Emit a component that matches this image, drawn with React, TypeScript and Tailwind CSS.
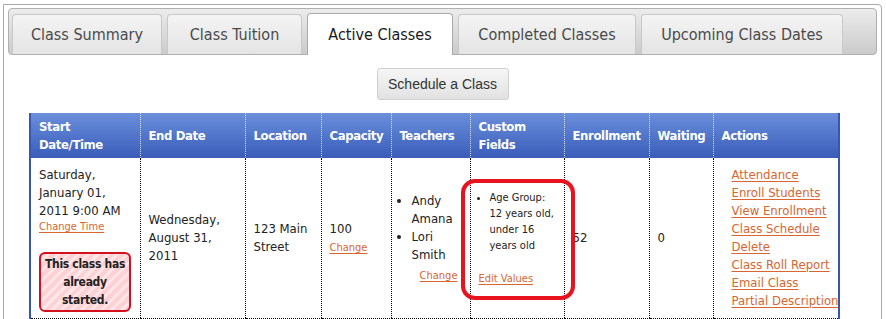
import React from 'react';

const font = { fontFamily: '"DejaVu Sans Condensed", "DejaVu Sans", sans-serif' };

const tabs = [
    { label: 'Class Summary', w: 'w-[150px]' },
    { label: 'Class Tuition', w: 'w-[135px]' },
    { label: 'Active Classes', w: 'w-[146px]', active: true },
    { label: 'Completed Classes', w: 'w-[178px]' },
    { label: 'Upcoming Class Dates', w: 'w-[202px]' },
];

const actions = [
    'Attendance',
    'Enroll Students',
    'View Enrollment',
    'Class Schedule',
    'Delete',
    'Class Roll Report',
    'Email Class',
    'Partial Description',
];

const linkCls = 'text-[#d9652f] underline underline-offset-2 decoration-1';

const Th: React.FC<{ w: string; children: React.ReactNode; first?: boolean }> = ({ w, children, first }) => (
    <th
        className={`${w} px-[8px] py-[4px] text-left align-middle font-bold text-white text-[13px] tracking-[-0.4px] leading-[18px] ${first ? '' : 'border-l border-dotted border-l-white/80'}`}
    >
        {children}
    </th>
);

const Td: React.FC<{ children?: React.ReactNode; first?: boolean; className?: string }> = ({ children, first, className }) => (
    <td
        className={`px-[8px] py-[6px] text-[13px] leading-[18px] text-[#222] border-b border-dotted border-b-black ${first ? '' : 'border-l border-dotted border-l-black'} ${className ?? 'align-middle'}`}
    >
        {children}
    </td>
);

export default function App() {
    return (
        <div className="w-[886px] h-[319px] overflow-hidden bg-white" style={font}>
            <div className="ml-[3px] mt-[4px] w-[879px] h-[330px] border border-[#a9a9a9] rounded-tr-[4px] bg-white px-[4px] pt-[3px]">
                {/* tab strip */}
                <div className="h-[47px] rounded-[4px] border border-[#b0b0b0] bg-gradient-to-b from-[#ececec] to-[#cbcbcb] flex items-end gap-[5px] pl-[3px]">
                    {tabs.map(t => (
                        <div
                            key={t.label}
                            className={`${t.w} flex items-center justify-center rounded-t-[4px] border border-b-0 text-[16px] ${
                                t.active
                                    ? 'h-[42px] -mb-px bg-white border-[#aaaaaa] text-[#1a1a1a]'
                                    : 'h-[40px] border-[#c8c8c8] bg-gradient-to-b from-[#f4f4f4] to-[#e4e4e4] text-[#4a4a4a]'
                            }`}
                        >
                            {t.label}
                        </div>
                    ))}
                </div>

                <div className="flex justify-center mt-[13px]">
                    <button
                        className="w-[132px] h-[32px] rounded-[3px] border border-[#cfcfcf] bg-gradient-to-b from-[#f6f6f6] to-[#e2e2e2] text-[14px] text-[#333]"
                        style={{ fontFamily: '"Liberation Sans", Arial, sans-serif' }}
                    >
                        Schedule a Class
                    </button>
                </div>

                <div className="ml-[21px] mt-[13px] w-[810px]">
                    <table className="w-[809px] table-fixed border-collapse border-x-2 border-x-[#3556b8]">
                        <thead>
                            <tr className="h-[45px] bg-gradient-to-b from-[#6b8fdb] to-[#3a5cb9]">
                                <Th w="w-[110px]" first>Start Date/Time</Th>
                                <Th w="w-[105px]">End Date</Th>
                                <Th w="w-[76px]">Location</Th>
                                <Th w="w-[70px]">Capacity</Th>
                                <Th w="w-[79px]">Teachers</Th>
                                <Th w="w-[94px]">Custom Fields</Th>
                                <Th w="w-[85px]">Enrollment</Th>
                                <Th w="w-[64px]">Waiting</Th>
                                <Th w="w-[126px]">Actions</Th>
                            </tr>
                        </thead>
                        <tbody>
                            <tr className="h-[157px]">
                                <Td first className="align-top pt-[8px]">
                                    <div>Saturday, January 01, 2011 9:00 AM</div>
                                    <a className={`${linkCls} text-[11px] leading-[14px] block`}>Change Time</a>
                                    <div className="mt-[18px] w-[92px] rounded-[6px] border-2 border-[#d4101f] bg-[repeating-linear-gradient(-45deg,#ffd0d4_0px,#ffd0d4_4px,#ffe6e8_4px,#ffe6e8_7px)] text-center font-bold text-[12px] tracking-[-0.3px] leading-[18px] text-[#222] py-[1px]">
                                        This class has already started.
                                    </div>
                                </Td>
                                <Td>Wednesday, August 31, 2011</Td>
                                <Td>123 Main Street</Td>
                                <Td>
                                    <div>100</div>
                                    <a className={`${linkCls} text-[11px] leading-[14px]`}>Change</a>
                                </Td>
                                <Td className="align-middle pr-[2px]">
                                    <ul className="list-disc pl-[12px]">
                                        <li>Andy Amana</li>
                                        <li>Lori Smith</li>
                                    </ul>
                                    <div className="text-right mt-[2px] pr-[10px]">
                                        <a className={`${linkCls} text-[11px] leading-[14px]`}>Change</a>
                                    </div>
                                </Td>
                                <Td className="align-middle relative">
                                    <div className="absolute left-[-10px] top-[21px] w-[114px] h-[121px] rounded-[14px] border-4 border-[#e8131f]" />
                                    <ul className="list-disc pl-[11px] text-[11px] leading-[16px]">
                                        <li>Age Group: 12 years old, under 16 years old</li>
                                    </ul>
                                    <a className={`${linkCls} text-[11px] leading-[14px] block mt-[18px]`}>Edit Values</a>
                                </Td>
                                <Td>52</Td>
                                <Td>0</Td>
                                <Td className="align-middle pl-[18px] pr-0 whitespace-nowrap">
                                    {actions.map(a => (
                                        <div key={a}>
                                            <a className={linkCls}>{a}</a>
                                        </div>
                                    ))}
                                </Td>
                            </tr>
                        </tbody>
                    </table>
                </div>
            </div>
        </div>
    );
}
